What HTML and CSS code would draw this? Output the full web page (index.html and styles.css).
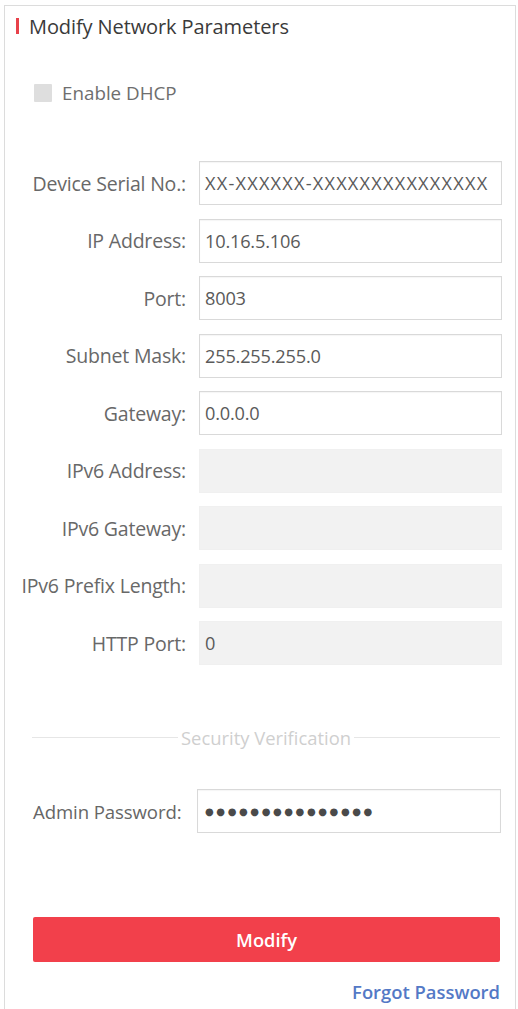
FILE: index.html
```html
<!DOCTYPE html>
<html lang="en">
<head>
<meta charset="utf-8">
<title>Modify Network Parameters</title>
<link rel="stylesheet" href="styles.css">
</head>
<body>
<div class="panel">
  <div class="title"><span class="title-bar"></span><span class="title-text">Modify Network Parameters</span></div>

  <label class="dhcp"><span class="checkbox"></span><span>Enable DHCP</span></label>

  <div class="form">
    <div class="label">Device Serial No.:</div>
    <div class="field serial">XX-XXXXXX-XXXXXXXXXXXXXXX</div>

    <div class="label">IP Address:</div>
    <div class="field">10.16.5.106</div>

    <div class="label">Port:</div>
    <div class="field">8003</div>

    <div class="label">Subnet Mask:</div>
    <div class="field">255.255.255.0</div>

    <div class="label">Gateway:</div>
    <div class="field">0.0.0.0</div>

    <div class="label">IPv6 Address:</div>
    <div class="field disabled"></div>

    <div class="label">IPv6 Gateway:</div>
    <div class="field disabled"></div>

    <div class="label">IPv6 Prefix Length:</div>
    <div class="field disabled"></div>

    <div class="label">HTTP Port:</div>
    <div class="field disabled">0</div>
  </div>

  <div class="divider"><span class="line"></span><span class="divider-text">Security Verification</span><span class="line"></span></div>

  <div class="admin-row">
    <div class="admin-label">Admin Password:</div>
    <div class="field password">&#x25CF;&#x25CF;&#x25CF;&#x25CF;&#x25CF;&#x25CF;&#x25CF;&#x25CF;&#x25CF;&#x25CF;&#x25CF;&#x25CF;&#x25CF;&#x25CF;&#x25CF;</div>
  </div>

  <button class="modify">Modify</button>

  <div class="forgot-row"><a class="forgot" href="#">Forgot Password</a></div>
</div>
</body>
</html>
```

FILE: styles.css
```css
html, body {
  margin: 0;
  padding: 0;
  background: #ffffff;
}

body {
  font-family: "Open Sans", "Noto Sans", "Liberation Sans", sans-serif;
  color: #666666;
}

.panel {
  box-sizing: border-box;
  margin: 5px 0 0 4px;
  width: 512px;
  min-height: 1010px;
  border: 1px solid #dcdcdc;
  border-bottom: none;
  padding: 0 13px;
}

.title {
  display: flex;
  align-items: center;
  height: 40px;
}

.title-bar {
  display: block;
  width: 3px;
  height: 16px;
  background: #e8414a;
  margin-left: -2px;
  margin-right: 10px;
}

.title-text {
  font-size: 20px;
  color: #3a3a3a;
  letter-spacing: -0.1px;
}

.dhcp {
  display: flex;
  align-items: center;
  gap: 10px;
  margin-top: 37px;
  margin-left: 16px;
  height: 20px;
  font-size: 18.8px;
  color: #6e6e6e;
}

.checkbox {
  display: block;
  width: 18px;
  height: 18px;
  background: #dedede;
  border-radius: 1px;
}

.form {
  display: grid;
  grid-template-columns: 168px 303px;
  column-gap: 13px;
  row-gap: 13.5px;
  margin-top: 58px;
}

.label {
  display: flex;
  align-items: center;
  justify-content: flex-end;
  font-size: 19.5px;
  color: #686868;
  white-space: nowrap;
  height: 44px;
  letter-spacing: -0.2px;
}

.field {
  box-sizing: border-box;
  height: 44px;
  border: 1px solid #d9d9d9;
  box-shadow: inset 0 1px 1px rgba(0, 0, 0, 0.04);
  padding: 0 5px;
  display: flex;
  align-items: center;
  font-size: 18.2px;
  color: #5a5a5a;
  white-space: nowrap;
  overflow: hidden;
  background: #ffffff;
  letter-spacing: -0.2px;
}

.field.serial {
  letter-spacing: 1.2px;
}

.field.disabled {
  background: #f2f2f2;
  border-color: #f0f0f0;
  box-shadow: none;
}

.divider {
  display: flex;
  align-items: center;
  margin: 61px 2px 0 14px;
  height: 22px;
}

.line {
  flex: 1;
  height: 1px;
  background: #e6e6e6;
}

.divider-text {
  font-size: 18.4px;
  color: #cfcfcf;
  padding: 0 3px;
}

.admin-row {
  display: flex;
  align-items: center;
  margin: 41px 0 0 15px;
}

.admin-label {
  width: 164px;
  font-size: 18.6px;
  color: #666666;
  white-space: nowrap;
  letter-spacing: -0.1px;
}

.admin-row .field {
  width: 304px;
}

.field.password {
  font-family: "DejaVu Sans", sans-serif;
  font-size: 10px;
  letter-spacing: 2.6px;
  color: #4a4a4a;
  padding-left: 7px;
}

.modify {
  display: block;
  box-sizing: border-box;
  width: 467px;
  height: 45px;
  margin: 84px 0 0 15px;
  border: none;
  border-radius: 2px;
  background: #f2404b;
  color: #ffffff;
  font-family: "Open Sans", "Noto Sans", "Liberation Sans", sans-serif;
  font-size: 18.3px;
  font-weight: 600;
}

.forgot-row {
  display: flex;
  justify-content: flex-end;
  margin-top: 17px;
  padding-right: 2px;
}

.forgot {
  font-size: 18.4px;
  font-weight: 600;
  color: #5479c6;
  text-decoration: none;
}
```
